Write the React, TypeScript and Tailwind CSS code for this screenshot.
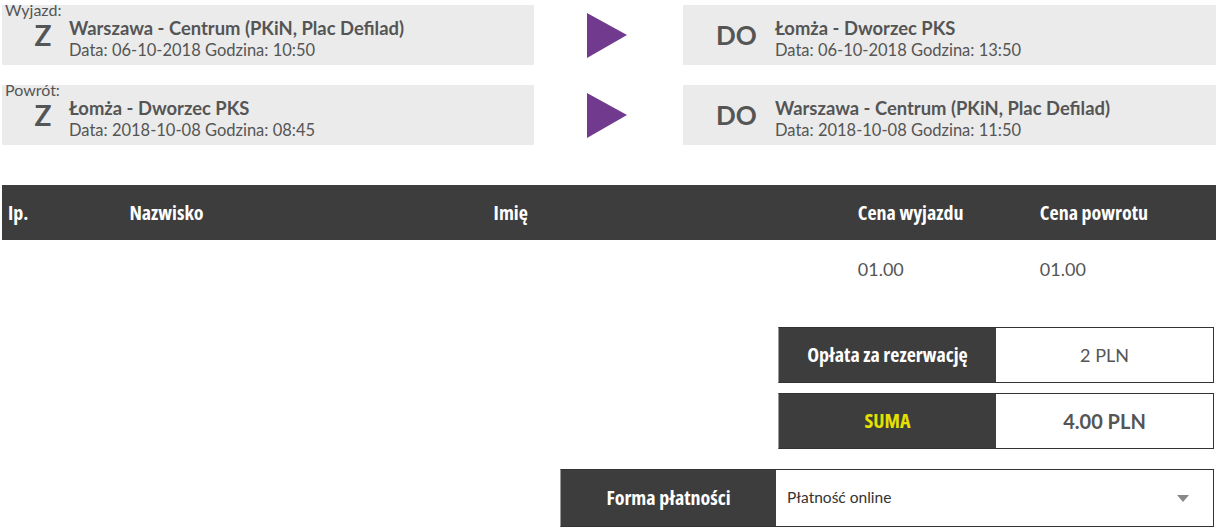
import React from "react";

const lato = { fontFamily: '"Lato", "Open Sans", sans-serif' };

type Leg = {
  label: string;
  from: string;
  fromDate: string;
  to: string;
  toDate: string;
};

const legs: Leg[] = [
  {
    label: "Wyjazd:",
    from: "Warszawa - Centrum (PKiN, Plac Defilad)",
    fromDate: "Data: 06-10-2018 Godzina: 10:50",
    to: "Łomża - Dworzec PKS",
    toDate: "Data: 06-10-2018 Godzina: 13:50",
  },
  {
    label: "Powrót:",
    from: "Łomża - Dworzec PKS",
    fromDate: "Data: 2018-10-08 Godzina: 08:45",
    to: "Warszawa - Centrum (PKiN, Plac Defilad)",
    toDate: "Data: 2018-10-08 Godzina: 11:50",
  },
];

const Arrow = () => (
  <svg width="40" height="45" viewBox="0 0 40 45">
    <polygon points="0,0 40,22 0,45" fill="#713a8f" />
  </svg>
);

const LegRow: React.FC<{ leg: Leg }> = ({ leg }) => (
  <div className="grid grid-cols-[532px_149px_533px] h-[60px]">
    <div className="bg-[#ebebeb] flex flex-col pl-[3px] text-[#555]">
      <div className="text-[16px] leading-[16px] -mt-[3px]">{leg.label}</div>
      <div className="flex items-start">
        <div className="w-[64px] text-center font-bold text-[28px] leading-[20px] pl-[12px] mt-[7px]">Z</div>
        <div className="flex flex-col">
          <div className="font-bold text-[18.4px] leading-[20px]">{leg.from}</div>
          <div className="text-[16.5px] leading-[24px]">{leg.fromDate}</div>
        </div>
      </div>
    </div>
    <div className="flex items-center justify-center pr-[3px]">
      <Arrow />
    </div>
    <div className="bg-[#ebebeb] flex items-start text-[#555]">
      <div className="w-[92px] pl-[33px] font-bold text-[26px] leading-[30px] mt-[15px]">DO</div>
      <div className="flex flex-col pt-[13px]">
        <div className="font-bold text-[18.4px] leading-[20px]">{leg.to}</div>
        <div className="text-[16.5px] leading-[24px]">{leg.toDate}</div>
      </div>
    </div>
  </div>
);

const head = "font-bold text-[20px] text-white font-stretch-condensed";
const headFont = { fontFamily: '"Open Sans", "DejaVu Sans", sans-serif' };

export default function App() {
  return (
    <div className="w-[1218px] h-[529px] bg-white overflow-hidden pt-[5px] px-[2px]" style={lato}>
      <div className="flex flex-col gap-[20px]">
        {legs.map((l) => (
          <LegRow key={l.label} leg={l} />
        ))}
      </div>

      <div className="mt-[40px] w-[1214px]">
        <div className="grid grid-cols-[10%_30%_30%_15%_15%] h-[55px] items-center bg-[#3d3d3d]" style={headFont}>
          <div className={`${head} pl-[6px]`}>Ip.</div>
          <div className={`${head} pl-[6px]`}>Nazwisko</div>
          <div className={`${head} pl-[6px]`}>Imię</div>
          <div className={`${head} pl-[6px]`}>Cena wyjazdu</div>
          <div className={`${head} pl-[6px]`}>Cena powrotu</div>
        </div>
        <div className="grid grid-cols-[10%_30%_30%_15%_15%] h-[58px] items-center text-[18px] text-[#555]">
          <div />
          <div />
          <div />
          <div className="pl-[6px]">01.00</div>
          <div className="pl-[6px]">01.00</div>
        </div>
      </div>

      <div className="flex flex-col items-end gap-[10px] mt-[29px] pr-[2px]">
        <div className="w-[436px] h-[56px] grid grid-cols-2 border border-[#333] border-l-[#999]">
          <div className="bg-[#3d3d3d] flex items-center justify-center" style={headFont}>
            <span className={head}>Opłata za rezerwację</span>
          </div>
          <div className="flex items-center justify-center text-[18px] text-[#555]">2 PLN</div>
        </div>
        <div className="w-[436px] h-[56px] grid grid-cols-2 border border-[#333] border-l-[#999]">
          <div className="bg-[#3d3d3d] flex items-center justify-center" style={headFont}>
            <span className="font-bold text-[20px] text-[#e5e000] font-stretch-condensed">SUMA</span>
          </div>
          <div className="flex items-center justify-center text-[20px] font-bold text-[#555]">4.00 PLN</div>
        </div>
      </div>

      <div className="flex justify-end mt-[20px] pr-[2px]">
        <div className="w-[654px] h-[58px] grid grid-cols-[215px_1fr] border border-[#333] border-l-[#999]">
          <div className="bg-[#3d3d3d] flex items-center justify-center" style={headFont}>
            <span className={head}>Forma płatności</span>
          </div>
          <div className="flex items-center justify-between pl-[11px] pr-[24px] text-[15.5px] text-[#333]">
            <span>Płatność online</span>
            <svg width="12" height="7" viewBox="0 0 12 7">
              <polygon points="0,0 12,0 6,7" fill="#888" />
            </svg>
          </div>
        </div>
      </div>
    </div>
  );
}
